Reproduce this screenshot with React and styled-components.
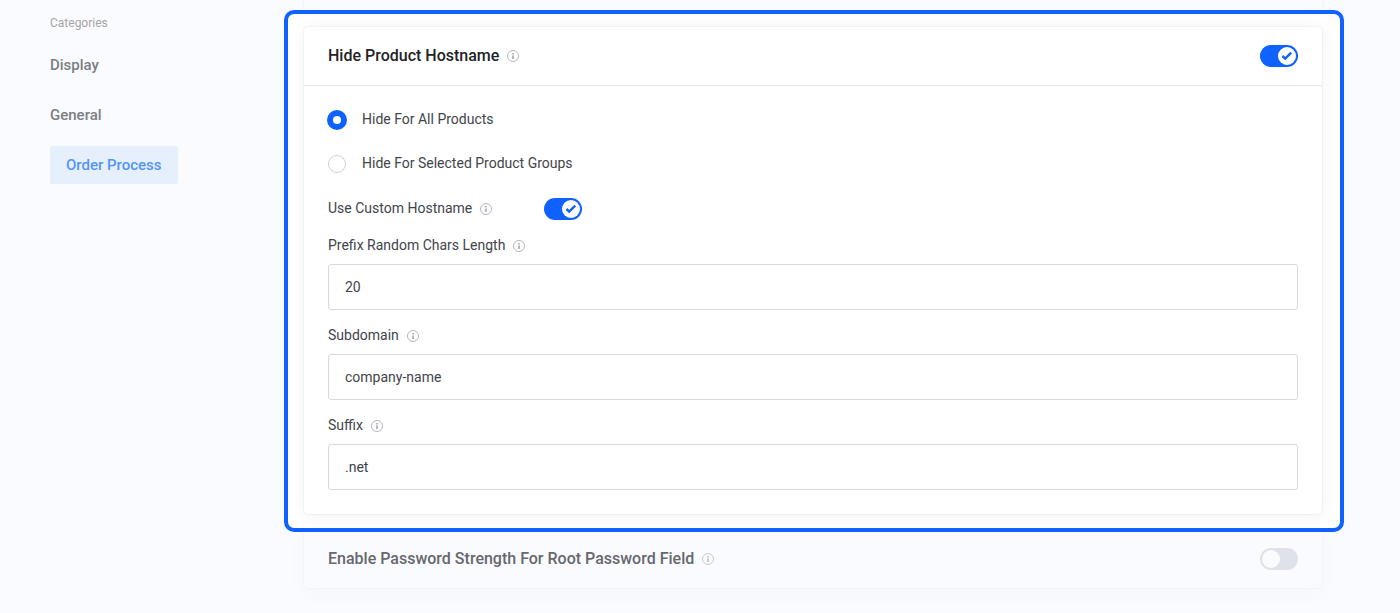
import React, { useId, useState } from "react";
import styled, { createGlobalStyle, css } from "styled-components";

const GlobalStyle = createGlobalStyle`
  *, *::before, *::after { box-sizing: border-box; }
  body {
    margin: 0;
    background: #fafbff;
    color: #42444b;
    font-family: Roboto, "Liberation Sans", sans-serif;
    font-size: 14px;
    line-height: 20px;
  }
`;

const Page = styled.div`
  display: flex;
  min-height: 100vh;
`;

const Sidebar = styled.aside`
  flex: 0 0 284px;
  padding: 13px 50px;
`;

const SidebarTitle = styled.h2`
  margin: 0 0 13px;
  color: #a3a5a8;
  font-size: 12px;
  font-weight: 400;
  line-height: 20px;
`;

const NavList = styled.nav`
  display: flex;
  flex-direction: column;
  align-items: flex-start;
  gap: 12px;
`;

const NavLink = styled.a`
  padding: 9px 0;
  border-radius: 2px;
  color: #7b7e83;
  font-size: 15px;
  font-weight: 500;
  line-height: 20px;
  text-decoration: none;
  ${(p) =>
    p.$active &&
    css`
      padding: 9px 16px;
      background: #e6f0fd;
      color: #5495fb;
    `}
`;

const Main = styled.main`
  flex: 1;
  min-width: 0;
  padding-right: 56px;
`;

const DimmedCard = styled.section`
  margin: 0 22px 0 20px;
  border-radius: ${(p) => (p.$last ? "0 0 4px 4px" : "0")};
  background: #fafbff;
  box-shadow: 0 0 2px rgba(0, 0, 0, 0.08), 0 4px 20px rgba(60, 80, 120, 0.03);
  min-height: 10px;
`;

const Highlight = styled.div`
  position: relative;
  z-index: 1;
  padding: 13px 18px 14px 16px;
  border: 4px solid #0f62fe;
  border-radius: 10px;
  background: #fff;
`;

const Card = styled.section`
  border-radius: 4px;
  background: #fff;
  box-shadow: 0 0 2px rgba(0, 0, 0, 0.12), 0 2px 20px rgba(0, 0, 0, 0.05);
`;

const CardHeader = styled.header`
  display: flex;
  align-items: center;
  justify-content: space-between;
  padding: ${(p) => (p.$dimmed ? "16px 24px 18px" : "18px 24px")};
  border-bottom: ${(p) => (p.$dimmed ? "0" : "1px solid #e4e4e6")};
`;

const TitleGroup = styled.div`
  display: flex;
  align-items: center;
  gap: 8px;
`;

const CardTitle = styled.h3`
  margin: 0;
  color: ${(p) => (p.$dimmed ? "#66686d" : "#222326")};
  font-size: 16px;
  font-weight: 500;
  line-height: 20px;
`;

const CardBody = styled.div`
  padding: 24px;
`;

const RadioGroup = styled.div`
  display: flex;
  flex-direction: column;
  gap: 24px;
`;

const RadioLabel = styled.label`
  display: flex;
  align-items: center;
  gap: 16px;
`;

const LabelText = styled.span`
  display: block;
  padding-bottom: 2px;
  line-height: 18px;
`;

const RadioInput = styled.input`
  appearance: none;
  width: 18px;
  height: 18px;
  margin: 0;
  border: 1px solid #cfd1d6;
  border-radius: 50%;
  background: #fff;
  &:checked {
    border: 5px solid #0f62fe;
    box-shadow: 0 0 0 1px #0f62fe;
  }
`;

const SwitchRow = styled.div`
  display: grid;
  grid-template-columns: 200px auto;
  justify-content: start;
  align-items: center;
  column-gap: 16px;
  margin-top: 24px;
`;

const SwitchTrack = styled.span`
  display: flex;
  justify-content: ${(p) => (p.$on ? "flex-end" : "flex-start")};
  width: 38px;
  height: 22px;
  padding: 2px;
  border-radius: 11px;
  background: ${(p) => (p.$on ? "#0f62fe" : "#e0e2ea")};
  position: relative;
`;

const SwitchKnob = styled.span`
  display: flex;
  align-items: center;
  justify-content: center;
  width: 18px;
  height: 18px;
  border-radius: 50%;
  background: ${(p) => (p.$on ? "#fff" : "#fafbff")};
`;

const SwitchInput = styled.input`
  position: absolute;
  inset: 0;
  width: 100%;
  height: 100%;
  margin: 0;
  opacity: 0;
  cursor: pointer;
`;

const Field = styled.div`
  margin-top: 16px;
`;

const LabelRow = styled.div`
  display: flex;
  align-items: center;
  gap: 8px;
`;

const TextInput = styled.input`
  display: block;
  width: 100%;
  height: 46px;
  margin-top: 8px;
  padding: 0 16px;
  border: 1px solid #d9dadd;
  border-radius: 3px;
  background: #fff;
  color: #42444b;
  font: inherit;
`;

const InfoSvg = styled.svg`
  display: block;
  flex: none;
  color: ${(p) => (p.$dimmed ? "#c9cad0" : "#b4b6bc")};
`;

function InfoIcon({ dimmed }) {
  return (
    <InfoSvg $dimmed={dimmed} width="12" height="12" viewBox="0 0 12 12" aria-hidden="true">
      <circle cx="6" cy="6" r="5.5" fill="none" stroke="currentColor" />
      <path d="M5 3h2v1.6H5zM5 5.6h2V9H5z" fill="currentColor" />
    </InfoSvg>
  );
}

function Switch({ label, defaultOn }) {
  const [on, setOn] = useState(defaultOn);
  return (
    <SwitchTrack $on={on}>
      <SwitchKnob $on={on}>
        {on && (
          <svg width="12" height="12" viewBox="0 0 12 12" aria-hidden="true">
            <path d="M1.4 6L4.2 8.6L10.2 2.6" fill="none" stroke="#0f62fe" strokeWidth="2.4" />
          </svg>
        )}
      </SwitchKnob>
      <SwitchInput
        type="checkbox"
        role="switch"
        aria-label={label}
        checked={on}
        onChange={(e) => setOn(e.target.checked)}
      />
    </SwitchTrack>
  );
}

function TextField({ label, value }) {
  const id = useId();
  return (
    <Field>
      <LabelRow>
        <LabelText as="label" htmlFor={id}>{label}</LabelText>
        <InfoIcon />
      </LabelRow>
      <TextInput id={id} type="text" defaultValue={value} />
    </Field>
  );
}

export default function App() {
  return (
    <>
      <GlobalStyle />
      <Page>
        <Sidebar>
          <SidebarTitle>Categories</SidebarTitle>
          <NavList>
            <NavLink href="#display">Display</NavLink>
            <NavLink href="#general">General</NavLink>
            <NavLink href="#order-process" $active aria-current="page">
              Order Process
            </NavLink>
          </NavList>
        </Sidebar>
        <Main>
          <DimmedCard />
          <Highlight>
            <Card>
              <CardHeader>
                <TitleGroup>
                  <CardTitle>Hide Product Hostname</CardTitle>
                  <InfoIcon />
                </TitleGroup>
                <Switch label="Hide Product Hostname" defaultOn />
              </CardHeader>
              <CardBody>
                <RadioGroup role="radiogroup" aria-label="Hide Product Hostname">
                  <RadioLabel>
                    <RadioInput type="radio" name="scope" value="all" defaultChecked />
                    <LabelText>Hide For All Products</LabelText>
                  </RadioLabel>
                  <RadioLabel>
                    <RadioInput type="radio" name="scope" value="groups" />
                    <LabelText>Hide For Selected Product Groups</LabelText>
                  </RadioLabel>
                </RadioGroup>
                <SwitchRow>
                  <LabelRow>
                    <LabelText>Use Custom Hostname</LabelText>
                    <InfoIcon />
                  </LabelRow>
                  <Switch label="Use Custom Hostname" defaultOn />
                </SwitchRow>
                <TextField label="Prefix Random Chars Length" value="20" />
                <TextField label="Subdomain" value="company-name" />
                <TextField label="Suffix" value=".net" />
              </CardBody>
            </Card>
          </Highlight>
          <DimmedCard $last>
            <CardHeader $dimmed>
              <TitleGroup>
                <CardTitle $dimmed>Enable Password Strength For Root Password Field</CardTitle>
                <InfoIcon dimmed />
              </TitleGroup>
              <Switch label="Enable Password Strength For Root Password Field" defaultOn={false} />
            </CardHeader>
          </DimmedCard>
        </Main>
      </Page>
    </>
  );
}
